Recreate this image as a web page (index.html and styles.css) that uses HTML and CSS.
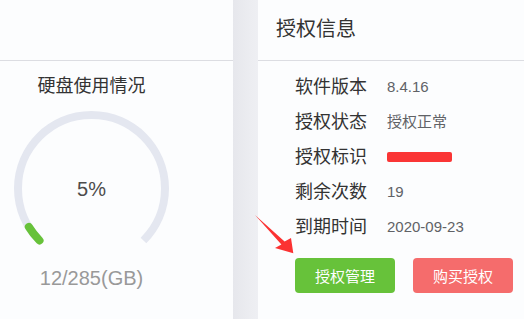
FILE: index.html
```
<!DOCTYPE html>
<html lang="zh-CN">
<head>
    <meta charset="UTF-8">
    <title>授权信息</title>
    <link rel="stylesheet" href="styles.css">
</head>
<body>
    <div class="page">
        <div class="panel disk">
            <div class="panel-head"></div>
            <div class="disk-body">
                <div class="disk-title">硬盘使用情况</div>
                <svg class="gauge" width="183" height="164" viewBox="0 0 183 164">
                    <path d="M39.53 142.47 A73.5 73.5 0 1 1 143.47 142.47" fill="none" stroke="#e4e7f0" stroke-width="8"/>
                    <path d="M39.53 142.47 A73.5 73.5 0 0 1 28.83 128.9" fill="none" stroke="#67c23a" stroke-width="8" stroke-linecap="round"/>
                    <text x="91.5" y="97.5" text-anchor="middle" class="gauge-num">5%</text>
                </svg>
                <div class="disk-size">12/285(GB)</div>
            </div>
        </div>
        <div class="strip"></div>
        <div class="panel license">
            <div class="panel-head">
                <span class="panel-title">授权信息</span>
            </div>
            <div class="license-body">
                <div class="row"><span class="label">软件版本</span><span class="value">8.4.16</span></div>
                <div class="row"><span class="label">授权状态</span><span class="value">授权正常</span></div>
                <div class="row"><span class="label">授权标识</span><span class="value"><span class="masked"></span></span></div>
                <div class="row"><span class="label">剩余次数</span><span class="value">19</span></div>
                <div class="row"><span class="label">到期时间</span><span class="value">2020-09-23</span></div>
                <div class="actions">
                    <button class="btn btn-green">授权管理</button>
                    <button class="btn btn-red">购买授权</button>
                </div>
            </div>
        </div>
        <svg class="arrow" width="50" height="45" viewBox="0 0 50 45">
            <polygon points="5,3 34.6,29.4 41,26 43.3,41.3 25,36 31.4,32.6" fill="#fb3232"/>
        </svg>
    </div>
</body>
</html>
```

FILE: styles.css
```
body{
    margin: 0;
    font-family: "Liberation Sans", "Noto Sans CJK SC", sans-serif;
    background: #fcfdfe;
    color: #333;
}
.page{
    position: relative;
    display: flex;
    width: 524px;
    height: 319px;
    overflow: hidden;
}
.panel{
    background: #fcfdfe;
}
.disk{
    width: 233px;
}
.license{
    flex: 1;
}
.strip{
    width: 25px;
    background: linear-gradient(to right, #e6e7ec, #ecedf1 70%, #eeeff3);
}
.panel-head{
    height: 60px;
    border-bottom: 1px solid #dcdde2;
    box-sizing: content-box;
    display: flex;
    align-items: center;
}
.panel-title{
    padding-left: 18px;
    font-size: 20px;
    line-height: 26px;
    color: #333;
    margin-top: -3px;
}
.disk-body{
    width: 183px;
    text-align: center;
    padding-top: 13px;
}
.disk-title{
    font-size: 18px;
    line-height: 24px;
    color: #333;
}
.gauge{
    display: block;
}
.gauge-num{
    font-family: "Liberation Sans", sans-serif;
    font-size: 20px;
    fill: #4c4c4c;
}
.disk-size{
    font-size: 20px;
    line-height: 32px;
    color: #999;
}
.license-body{
    padding: 8px 0 0 37px;
}
.row{
    display: flex;
    align-items: center;
    height: 35px;
}
.label{
    width: 92px;
    font-size: 18px;
    line-height: 24px;
    color: #333;
}
.value{
    font-size: 15px;
    line-height: 20px;
    color: #606266;
    display: flex;
    align-items: center;
}
.masked{
    display: inline-block;
    width: 65px;
    height: 10px;
    background: #fa3535;
    border-radius: 2px;
}
.actions{
    display: flex;
    gap: 18px;
    margin-top: 14px;
}
.btn{
    width: 100px;
    height: 35px;
    border: none;
    border-radius: 4px;
    color: #fff;
    font-family: "Liberation Sans", "Noto Sans CJK SC", sans-serif;
    font-size: 15px;
    padding: 0;
    cursor: pointer;
}
.btn-green{
    background: #67c23a;
}
.btn-red{
    background: #f56c6c;
}
.arrow{
    position: absolute;
    left: 250px;
    top: 212px;
}
```
